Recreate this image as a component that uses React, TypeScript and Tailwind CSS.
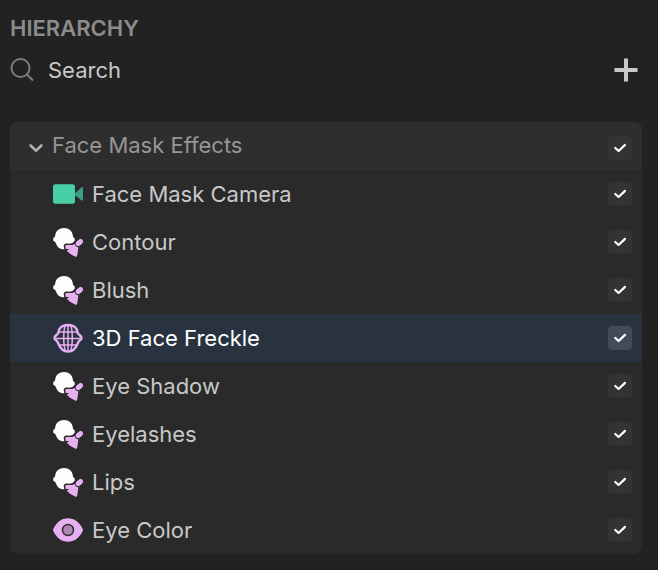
import { useState } from 'react';
import clsx from 'clsx';

type IconKind = 'camera' | 'makeup' | 'mesh' | 'eye';

interface SceneObject {
  id: string;
  name: string;
  icon: IconKind;
}

const OBJECTS: SceneObject[] = [
  { id: 'camera', name: 'Face Mask Camera', icon: 'camera' },
  { id: 'contour', name: 'Contour', icon: 'makeup' },
  { id: 'blush', name: 'Blush', icon: 'makeup' },
  { id: 'freckle', name: '3D Face Freckle', icon: 'mesh' },
  { id: 'eye-shadow', name: 'Eye Shadow', icon: 'makeup' },
  { id: 'eyelashes', name: 'Eyelashes', icon: 'makeup' },
  { id: 'lips', name: 'Lips', icon: 'makeup' },
  { id: 'eye-color', name: 'Eye Color', icon: 'eye' },
];

function CameraIcon() {
  return (
    <svg viewBox="0 0 30 30" className="size-[30px]" aria-hidden="true">
      <rect x="0" y="5.2" width="22" height="19.5" rx="2.5" fill="#48cfa8" />
      <path d="M22 14.2 L28.4 8.4 Q30 7.2 30 9.2 V20.4 Q30 22.4 28.4 21.2 L22 16.2 Z" fill="#3a9e82" />
    </svg>
  );
}

function MakeupIcon() {
  return (
    <svg viewBox="0 -1 30 30" className="size-[30px]" aria-hidden="true">
      <path
        d="M11 0 C15.8 0 19.2 2.8 19.8 7.4 C19.9 8.4 20.3 8.9 20.9 9.5 C22.4 11.2 22.2 13 20.4 14 C20 14.3 19.8 14.6 19.5 15.1 C17.6 15.7 15.6 15.8 13.4 15.5 C11.3 15.4 10.5 17 10.8 19.2 L11.4 21.2 C8 21.6 5.2 19.8 3.8 17.2 C3 15.6 2.8 14.4 1.8 13.7 C-0.2 12.6 -0.5 11 1 9.5 C1.7 8.9 2 8.4 2.2 7.4 C2.8 2.8 6.2 0 11 0 Z"
        fill="#ffffff"
      />
      <path
        d="M25.4 11.9 C26.7 10.7 28.4 10.7 29.4 11.8 C30.4 12.9 30.2 14.5 29 15.7 L26.9 17.6 C25.9 18.5 24.7 18.6 23.6 17.6 C22.4 16.5 22.2 15.2 23.2 14.1 Z"
        fill="#e6b0f2"
      />
      <path
        d="M21.8 15.9 C22.2 17.7 23.4 18.9 25.3 19.2 C25.2 22 24.7 25 24.2 27.4 C24 28.7 23 29 21.9 28.5 C18.2 26.9 15.2 24.8 13.8 22.6 L16.4 21 L12.9 20.9 C12.3 19.8 12.2 18.9 12.3 18 C12.4 17.1 13.1 16.8 13.9 16.9 C16.6 17.3 19.3 17 21.8 15.9 Z"
        fill="#e6b0f2"
      />
    </svg>
  );
}

function MeshIcon() {
  return (
    <svg viewBox="0 0 30 30" className="size-[30px]" fill="none" stroke="#e6b0f2" aria-hidden="true">
      <path
        d="M15 1.9 C20.4 1.9 24.2 4.9 24.6 9.5 C24.7 10.6 25.2 11 26.3 11.8 C29.2 13.5 29 16 26.7 17.5 C25.5 18.3 25.2 19 24.6 20.6 C22.8 25.3 19.5 28.5 15 28.5 C10.5 28.5 7.2 25.3 5.4 20.6 C4.8 19 4.5 18.3 3.3 17.5 C1 16 0.8 13.5 3.7 11.8 C4.8 11 5.3 10.6 5.4 9.5 C5.8 4.9 9.6 1.9 15 1.9 Z"
        strokeWidth="2.5"
      />
      <path
        d="M15 2 V28.4 M12.3 2 C10.2 8 10.2 21.5 12.3 28.2 M17.7 2 C19.8 8 19.8 21.5 17.7 28.2 M5.6 9 H24.4 M2 15.5 H28 M5.8 22 H24.2"
        strokeWidth="1.5"
      />
    </svg>
  );
}

function EyeIcon() {
  return (
    <svg viewBox="0 0 30 30" className="size-[30px]" aria-hidden="true">
      <path
        d="M15 3.2 C21.5 3.2 26.3 7 29.5 13.5 Q30.3 15 29.5 16.5 C26.3 23 21.5 26.8 15 26.8 C8.5 26.8 3.7 23 0.5 16.5 Q-0.3 15 0.5 13.5 C3.7 7 8.5 3.2 15 3.2 Z"
        fill="#e6b0f2"
      />
      <circle cx="15" cy="15" r="5.5" fill="#ac86b5" stroke="#2a2a2a" strokeWidth="1.4" />
    </svg>
  );
}

const ICONS: Record<IconKind, () => React.JSX.Element> = {
  camera: CameraIcon,
  makeup: MakeupIcon,
  mesh: MeshIcon,
  eye: EyeIcon,
};

interface VisibilityToggleProps {
  label: string;
  selected?: boolean;
}

function VisibilityToggle({ label, selected = false }: VisibilityToggleProps) {
  return (
    <span className="grid size-6 shrink-0">
      <input
        type="checkbox"
        defaultChecked
        aria-label={`Enable ${label}`}
        className={clsx(
          'peer col-start-1 row-start-1 size-6 appearance-none rounded',
          selected ? 'bg-[#414c58]' : 'bg-[#333333]',
        )}
      />
      <svg
        viewBox="0 0 24 24"
        className="pointer-events-none invisible col-start-1 row-start-1 size-6 peer-checked:visible"
        fill="none"
        stroke="#ffffff"
        strokeWidth="2.2"
        strokeLinecap="round"
        strokeLinejoin="round"
        aria-hidden="true"
      >
        <path d="M7.3 12 L10.6 15 L17 8.9" />
      </svg>
    </span>
  );
}

export default function App() {
  const [open, setOpen] = useState(true);
  const [selectedId, setSelectedId] = useState('freckle');

  return (
    <main className="min-h-screen bg-[#222222] py-[13px] pr-4 pl-2.5 font-['Inter',sans-serif] text-[22px] leading-[30px] text-[#c8c8c8]">
      <h1 className="font-semibold text-[#8c8c8c]">HIERARCHY</h1>

      {/* Search bar */}
      <div className="mt-[9px] flex h-9 items-center">
        <label htmlFor="search" aria-label="Search" className="shrink-0">
          <svg viewBox="0 0 24 24" className="size-6" fill="none" stroke="#7b7b7b" strokeWidth="2" aria-hidden="true">
            <circle cx="10.5" cy="10" r="9" />
            <path d="M16.8 16.3 L23 22.5" />
          </svg>
        </label>
        <input
          id="search"
          type="text"
          placeholder="Search"
          className="ml-3.5 min-w-0 flex-1 bg-transparent outline-none placeholder:text-[#c8c8c8]"
        />
        <button type="button" aria-label="Add object" className="mr-1">
          <svg viewBox="0 0 24 24" className="size-6" stroke="#c8c8c8" strokeWidth="4" aria-hidden="true">
            <path d="M12 0.5 V23.5 M0.5 12 H23.5" />
          </svg>
        </button>
      </div>

      {/* Scene tree */}
      <section className="mt-[34px] overflow-hidden rounded-lg bg-[#2a2a2a]">
        <div className="flex h-12 items-end border-b-2 border-[#303030] bg-[#2e2e2e] pr-2.5 pb-2 pl-4">
          <button
            type="button"
            aria-expanded={open}
            onClick={() => setOpen(!open)}
            className="flex flex-1 items-center gap-1.5 text-left text-[#969696]"
          >
            <svg
              viewBox="0 0 20 20"
              className="size-5"
              fill="none"
              stroke="#b0b0b0"
              strokeWidth="2.6"
              strokeLinecap="round"
              aria-hidden="true"
            >
              <path d="M4.6 10.5 L10 15.8 L15.4 10.5" />
            </svg>
            Face Mask Effects
          </button>
          <VisibilityToggle label="Face Mask Effects" />
        </div>

        {open && (
          <ul>
            {OBJECTS.map(({ id, name, icon }) => {
              const Icon = ICONS[icon];
              const selected = id === selectedId;

              return (
                <li
                  key={id}
                  className={clsx('flex h-12 items-center pr-2.5 pl-[43px]', selected && 'bg-[#28333f] text-white')}
                >
                  <button
                    type="button"
                    onClick={() => setSelectedId(id)}
                    className="flex flex-1 items-center gap-[9px] text-left"
                  >
                    <Icon />
                    {name}
                  </button>
                  <VisibilityToggle label={name} selected={selected} />
                </li>
              );
            })}
          </ul>
        )}
      </section>
    </main>
  );
}
